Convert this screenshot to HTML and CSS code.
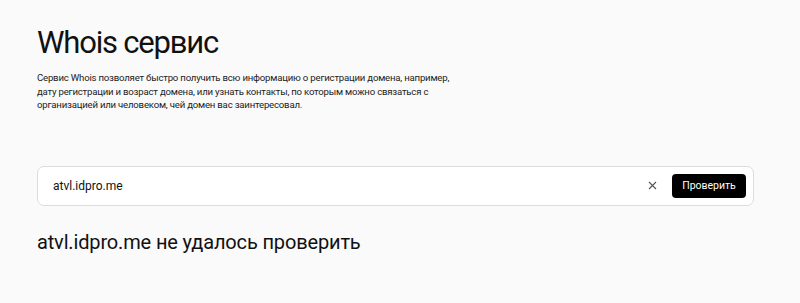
FILE: index.html
```html
<!DOCTYPE html>
<html lang="ru">
<head>
  <meta charset="UTF-8">
  <title>Whois сервис</title>
  <link rel="stylesheet" href="styles.css">
</head>
<body>
  <div class="page">
    <h1 class="title">Whois сервис</h1>
    <p class="lead">Сервис Whois позволяет быстро получить всю информацию о регистрации домена, например, дату регистрации и возраст домена, или узнать контакты, по которым можно связаться с организацией или человеком, чей домен вас заинтересовал.</p>

    <!-- Поиск -->
    <form class="search">
      <input class="search-input" type="text" value="atvl.idpro.me">
      <button type="button" class="clear-btn" aria-label="Очистить">
        <svg width="9" height="9" viewBox="0 0 9 9"><path d="M1 1L8 8M8 1L1 8" stroke="#555" stroke-width="1.1" fill="none"/></svg>
      </button>
      <button type="submit" class="check-btn">Проверить</button>
    </form>

    <h2 class="result">atvl.idpro.me не удалось проверить</h2>
  </div>
</body>
</html>
```

FILE: styles.css
```css
body {
  margin: 0;
  padding: 0;
  background: #fafafa;
  color: #111;
  font-family: Roboto, 'Noto Sans', sans-serif;
}

.page {
  padding: 23px 46px 0 37px;
}

.title {
  margin: 0;
  font-size: 31px;
  font-weight: 400;
  letter-spacing: -1.2px;
  line-height: 40px;
}

.lead {
  margin: 8px 0 0;
  max-width: 420px;
  font-size: 9.6px;
  line-height: 13.5px;
  color: #222;
  letter-spacing: -0.2px;
}

.search {
  display: flex;
  align-items: center;
  margin-top: 54px;
  height: 40px;
  box-sizing: border-box;
  background: #fff;
  border: 1px solid #dcdcdc;
  border-radius: 7px;
  padding: 0 7px 0 15px;
}

.search-input {
  flex: 1;
  border: none;
  outline: none;
  background: transparent;
  font-family: inherit;
  font-size: 12px;
  color: #111;
  padding: 0;
}

.clear-btn {
  border: none;
  background: none;
  padding: 0;
  margin-right: 15px;
  width: 9px;
  height: 9px;
  display: flex;
  cursor: pointer;
}

.check-btn {
  height: 24px;
  width: 74px;
  border: none;
  border-radius: 4px;
  background: #000;
  color: #fff;
  font-family: inherit;
  font-size: 10.5px;
  cursor: pointer;
}

.result {
  margin: 23px 0 0;
  font-size: 20px;
  font-weight: 400;
  letter-spacing: -0.15px;
  line-height: 26px;
}
```
